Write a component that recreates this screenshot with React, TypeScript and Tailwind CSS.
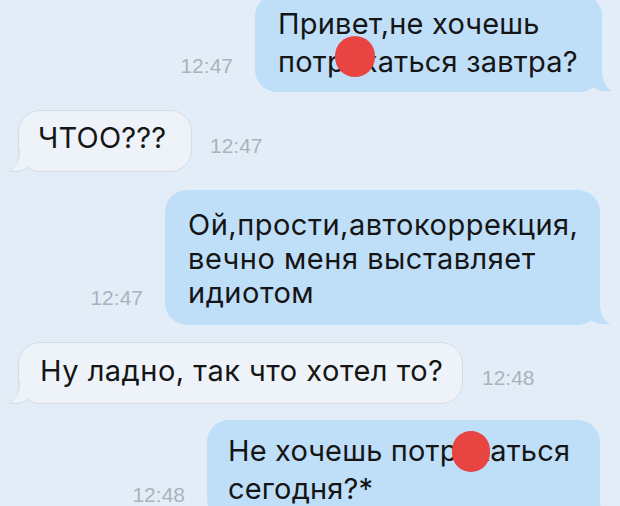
const OutTail = () => (
  <svg className="absolute -right-[11px] bottom-0" width="22" height="22" viewBox="0 0 22 22">
    <path d="M0 0 L11 0 C11 10 14 17 21 21 C14 22 7 21 2 17 Z" fill="#bfdff9" />
  </svg>
);

const InTail = () => (
  <svg className="absolute -left-[11px] -bottom-px" width="22" height="22" viewBox="0 0 22 22">
    <path d="M22 0 L11 0 C11 10 8 17 1 21 C8 22 15 21 20 17 Z" fill="#eef3f9" />
    <path d="M11.5 0 C11.5 10 8 17 1 21 C8 22 15 21 20 17" fill="none" stroke="#d3dde8" strokeWidth="1" />
  </svg>
);

const Time = ({ t, cls }: { t: string; cls: string }) => (
  <span
    className={`text-[21px] leading-none text-[#a9b3bd] whitespace-nowrap ${cls}`}
    style={{ fontFamily: '"Liberation Sans", Arial, sans-serif' }}
  >
    {t}
  </span>
);

// censored letters: the red dot lies over them
const Hidden = ({ cls }: { cls: string }) => (
  <span className="relative">
    ах
    <span className={`absolute rounded-full bg-[#e84442] ${cls}`} />
  </span>
);

export default function App() {
  return (
    <div
      className="w-[620px] h-[506px] overflow-hidden bg-[#e3edf7] text-[#151515]"
      style={{ fontFamily: 'Inter, "Liberation Sans", sans-serif' }}
    >
      <div className="flex flex-col gap-[17px] -mt-[6px]">
        {/* 1 */}
        <div className="flex items-end justify-end gap-[22px] pr-[18px]">
          <Time t="12:47" cls="mb-[16px]" />
          <div className="relative w-[347px] rounded-[22px] bg-[#bfdff9] pl-[23px] pt-[11px] pb-[11px] text-[29px] tracking-[0.2px] leading-[38px] whitespace-nowrap">
            Привет,не хочешь
            <br />
            потр<Hidden cls="-left-[10px] -top-[8px] w-[40px] h-[41px]" />аться завтра?
            <OutTail />
          </div>
        </div>

        {/* 2 */}
        <div className="flex items-end justify-start gap-[18px] pl-[18px] mt-[1px]">
          <div className="relative w-[174px] rounded-[22px] border border-[#d3dde8] bg-[#eef3f9] pl-[19px] pt-[8px] pb-[14px] text-[29px] tracking-[0.2px] leading-[38px] whitespace-nowrap">
            ЧТОО???
            <InTail />
          </div>
          <Time t="12:47" cls="mb-[16px]" />
        </div>

        {/* 3 */}
        <div className="flex items-end justify-end gap-[22px] pr-[20px] mt-[1px]">
          <Time t="12:47" cls="mb-[17px]" />
          <div className="relative w-[435px] rounded-[22px] bg-[#bfdff9] pl-[23px] pt-[18px] pb-[15px] text-[29px] tracking-[0.5px] leading-[34px] whitespace-nowrap">
            Ой,прости,автокоррекция,
            <br />
            вечно меня выставляет
            <br />
            идиотом
            <OutTail />
          </div>
        </div>

        {/* 4 */}
        <div className="flex items-end justify-start gap-[19px] pl-[18px]">
          <div className="relative w-[445px] rounded-[22px] border border-[#d3dde8] bg-[#eef3f9] pl-[21px] pt-[9px] pb-[13px] text-[29px] tracking-[0.5px] leading-[38px] whitespace-nowrap">
            Ну ладно, так что хотел то?
            <InTail />
          </div>
          <Time t="12:48" cls="mb-[16px]" />
        </div>

        {/* 5 */}
        <div className="flex items-end justify-end gap-[22px] pr-[20px] -mt-[1px]">
          <Time t="12:48" cls="mb-[16px]" />
          <div className="relative w-[393px] rounded-[22px] bg-[#bfdff9] pl-[21px] pt-[12px] pb-[13px] text-[29px] tracking-[0.15px] leading-[38px] whitespace-nowrap">
            Не хочешь потр<Hidden cls="-left-[6px] -top-[2px] w-[38px] h-[41px]" />аться
            <br />
            сегодня?*
            <OutTail />
          </div>
        </div>
      </div>
    </div>
  );
}
